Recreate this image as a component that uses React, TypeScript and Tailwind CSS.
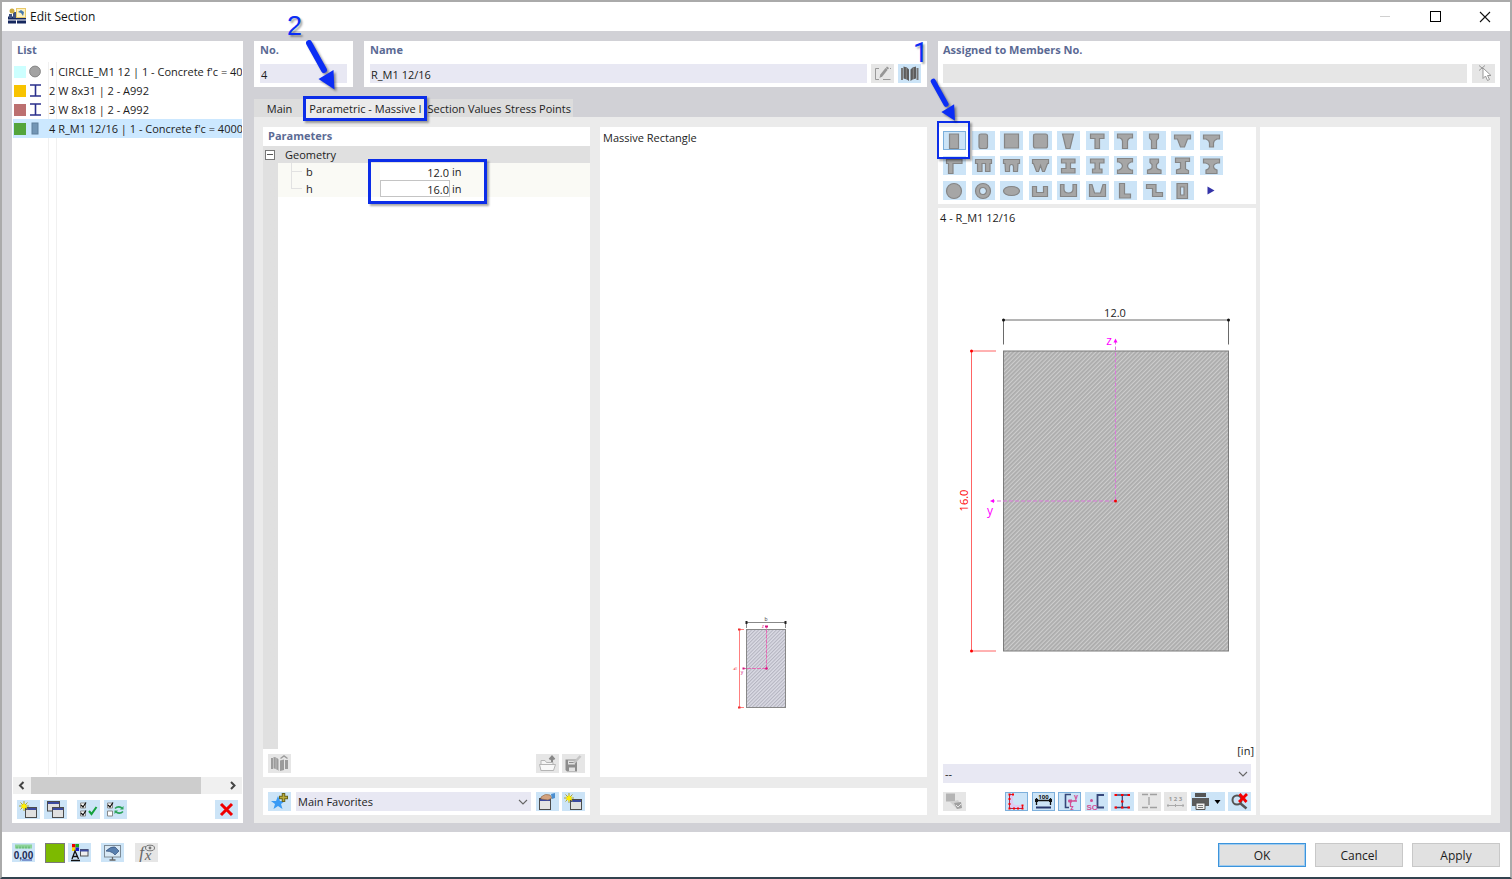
import { useState, type ReactNode } from 'react';
import clsx from 'clsx';

const iconBtn = 'flex h-[19px] w-[23px] shrink-0 items-center justify-center';
const panelTitle = 'text-[11px] leading-[18px] font-bold text-[#5b6a94]';

/* ---------- small building blocks ---------- */

type IconButtonProps = {
  label: string;
  disabled?: boolean;
  active?: boolean;
  className?: string;
  children: ReactNode;
};

function IconButton({ label, disabled, active, className, children }: IconButtonProps) {
  return (
    <button
      type="button"
      aria-label={label}
      disabled={disabled}
      className={clsx(
        iconBtn,
        disabled ? 'bg-[#e6e6e6]' : 'bg-[#cce4f7]',
        active && 'outline outline-1 -outline-offset-1 outline-[#7db0dc]',
        className
      )}
    >
      <svg viewBox="0 0 23 19" className="h-[19px] w-[23px]" fill="none">
        {children}
      </svg>
    </button>
  );
}

function Chevron() {
  return (
    <svg viewBox="0 0 10 6" className="pointer-events-none absolute top-[7px] right-[3px] h-[6px] w-[10px]" fill="none">
      <path d="M1 1l4 4 4-4" stroke="#666" strokeWidth="1.1" />
    </svg>
  );
}

function Arrow({ className }: { className: string }) {
  return (
    <svg viewBox="0 0 34 54" className={clsx('pointer-events-none absolute z-20 drop-shadow-[2px_2px_1px_rgba(0,0,0,0.4)]', className)}>
      <path d="M5 5l15 27" stroke="#0b2df5" strokeWidth="6" strokeLinecap="round" />
      <path d="M30.500 51.500L14.500 41 29.500 32Z" fill="#0b2df5" />
    </svg>
  );
}

const callout = 'pointer-events-none absolute z-10 border-[#0b2de8] shadow-[2px_2px_2px_rgba(0,0,0,0.35)]';
const calloutDigit =
  'pointer-events-none absolute z-20 text-[27px] leading-[27px] text-[#0b2df5] [text-shadow:2px_2px_2px_rgba(0,0,0,0.35)]';

/* ---------- data ---------- */

const sections = [
  { no: 1, name: "CIRCLE_M1 12 | 1 - Concrete f'c = 40", color: '#ccffff', shape: 'circle' },
  { no: 2, name: 'W 8x31 | 2 - A992', color: '#f8c300', shape: 'i' },
  { no: 3, name: 'W 8x18 | 2 - A992', color: '#bc7070', shape: 'i' },
  { no: 4, name: "R_M1 12/16 | 1 - Concrete f'c = 4000", color: '#54a53c', shape: 'rect' },
];

// outlines of the massive section types, drawn on a 23 x 19 button
const shapes = [
  { name: 'Rectangle', d: 'M6.500 3H15.500V17.500H6.500Z' },
  { name: 'Rounded rectangle', d: 'M9 3H13.500Q15.500 3 15.500 5V15.500Q15.500 17.500 13.500 17.500H9Q7 17.500 7 15.500V5Q7 3 9 3Z' },
  { name: 'Square', d: 'M4.500 3H18.500V17H4.500Z' },
  { name: 'Rounded square', d: 'M6.500 3H16.500Q18.500 3 18.500 5V15Q18.500 17 16.500 17H6.500Q4.500 17 4.500 15V5Q4.500 3 6.500 3Z' },
  { name: 'Trapezoid', d: 'M5.500 3H16.500L13 17.500H9Z' },
  { name: 'T-section', d: 'M4.500 3H18V7.500H13.500V17.500H9V7.500H4.500Z' },
  { name: 'T-section haunched', d: 'M3.500 3H18.500V7H16Q13.500 8 13.500 10.500V17.500H8.500V10.500Q8.500 8 6 7H3.500Z' },
  { name: 'T-section narrow', d: 'M6.500 3H15.500V7L13.500 9.500V17.500H8.500V9.500L6.500 7Z' },
  { name: 'T-section tapered', d: 'M3.500 4H19.500V8H16.500L13.500 16H9.500L6.500 8H3.500Z' },
  { name: 'T-section curved', d: 'M3.500 4H19.500V8H17Q13.500 9.500 13.500 12V16H9.500V12Q9.500 9.500 6 8H3.500Z' },
  { name: 'L-section inverted', d: 'M3.500 3.500H19V7.500H10V17.500H5.500V7.500H3.500Z' },
  { name: 'Double T', d: 'M3.500 3.500H19.500V7.500H18V15.500H13.500V7.500H10V15.500H5.500V7.500H3.500Z' },
  { name: 'Double T rounded', d: 'M3.500 3.500H19.500V7.500H18L17.500 15.500H13.500V11Q13.500 8.500 11.500 8.500T9.500 11V15.500H5.500L5 7.500H3.500Z' },
  { name: 'Double T tapered', d: 'M3.500 3.500H19.500V7.500H18.500L15.500 15.500H13.500L11.500 9.500 9.500 15.500H7.500L4.500 7.500H3.500Z' },
  { name: 'I-section', d: 'M4.500 3H18V7H13.500V12.500H18V17H4.500V12.500H9V7H4.500Z' },
  { name: 'I-section unequal', d: 'M4.500 3H18V7H13.500V13H16V17H6.500V13H9V7H4.500Z' },
  { name: 'I-section tapered', d: 'M3.500 2.500H18.500V6H17Q13.500 7.500 13.500 10T17 14H18.500V17.500H3.500V14H5Q8.500 12.500 8.500 10T5 6H3.500Z' },
  { name: 'I-section narrow', d: 'M7 3H15.500V6.500L13.500 8.500V11.500Q14 13.500 18 14V17.500H4.500V14Q8.500 13.500 9 11.500V8.500L7 6.500Z' },
  { name: 'I-section offset', d: 'M4.500 2H18.500V5.500H14.500V13L17.500 14.500V17.500H5.500V14L9.500 12.500V6.500H4.500Z' },
  { name: 'I-section asymmetric', d: 'M3.500 3H19.500V7H17.500Q13.500 8 13.500 10.500T17 14V17.500H6V14Q9.500 13 9.500 10.500T5.500 7H3.500Z' },
  { name: 'Circle', d: 'M3.500 10A7.500 7.500 0 1 0 18.500 10A7.500 7.500 0 1 0 3.500 10Z' },
  { name: 'Pipe', d: 'M3.500 10A7.500 7.500 0 1 0 18.500 10A7.500 7.500 0 1 0 3.500 10ZM7.500 10A3.500 3.500 0 1 0 14.500 10A3.500 3.500 0 1 0 7.500 10Z' },
  { name: 'Ellipse', d: 'M3.500 10A8 4.500 0 1 0 19.500 10A8 4.500 0 1 0 3.500 10Z' },
  { name: 'U-section', d: 'M3.500 5.500H7.500V11.500H14.500V5.500H18.500V15.500H3.500Z' },
  { name: 'U-section rounded', d: 'M3.500 3.500H7V8Q7 12 11.500 12T16 8V3.500H19.500V15.500H3.500Z' },
  { name: 'U-section tapered', d: 'M3.500 3.500H6L8.500 12H14.500L17 3.500H19.500V15.500H3.500Z' },
  { name: 'L-section', d: 'M5.500 2.500H10.500V13H16.500V17H5.500Z' },
  { name: 'Z-section', d: 'M3.500 3.500H13V11.500H19.500V15.500H9.500V7.500H3.500Z' },
  { name: 'Box', d: 'M6 2.500H16.500V17.500H6ZM9.500 6V14H13V6Z' },
];

const tabs = ['Main', 'Parametric - Massive I', 'Section Values', 'Stress Points'];

/* ---------- shared icon drawings ---------- */

function MiniWindow({ x, y }: { x: number; y: number }) {
  return (
    <g>
      <rect x={x + 0.5} y={y + 0.5} width="11" height="10" fill="#e0e0e0" stroke="#4c4c4c" />
      <rect x={x + 1} y={y + 1} width="10" height="2" fill="#3b4aa0" />
    </g>
  );
}

function NewWindowIcon() {
  return (
    <>
      <MiniWindow x={8} y={7} />
      <path d="M7 1v10M2 6h10M3.500 2.500l7 7M10.500 2.500l-7 7" stroke="#a89b20" strokeWidth=".9" />
      <path d="M7 2.500l1 2.300 2.300-.4-1.300 1.800 1.300 2-2.300-.4L7 10 6 7.800l-2.300.4L5 6.200 3.700 4.400l2.300.4z" fill="#ffef00" />
    </>
  );
}

function SectionGlyph({ shape }: { shape: string }) {
  return (
    <svg viewBox="0 0 13 13" className="h-[13px] w-[13px] shrink-0" fill="none">
      {shape === 'circle' && <circle cx="6" cy="6.500" r="5.400" fill="#a3a3a3" stroke="#858585" />}
      {shape === 'i' && <path d="M1 1h11M1 12h11M6.500 1v11" stroke="#2a2f8c" strokeWidth="1.600" />}
      {shape === 'rect' && <rect x="3" y="1" width="6" height="11" fill="#7396b5" stroke="#5f7f9c" />}
    </svg>
  );
}

/* ---------- parts of the dialog ---------- */

function TitleBar() {
  return (
    <header className="flex h-[29px] shrink-0 items-center bg-white pl-[6px]">
      <svg viewBox="0 0 18 16" className="mb-[2px] h-[16px] w-[18px]">
        <path d="M0 8.500h18v3H0zM0 12.500h8v3H0zM9 12.500h9v3H9z" fill="#15275e" />
        <path d="M1 6h3v4H1zM5 4h3v6H5z" fill="#3e5280" />
        <circle cx="4" cy="3" r="2.500" fill="#c9a93f" />
        <rect x="8.500" y=".5" width="9" height="9" fill="#fff2bf" stroke="#e8c96a" />
        <path d="M10 4l3-2 3 2-1 4-2-3z" fill="#4778ad" />
      </svg>
      <h1 className="ml-1 flex-1 text-[12px] text-[#111]">Edit Section</h1>
      <button type="button" aria-label="Minimize" disabled className="flex h-full w-[50px] items-center justify-center">
        <span className="h-px w-[10px] bg-[#d0d0d0]" />
      </button>
      <button type="button" aria-label="Maximize" className="flex h-full w-[50px] items-center justify-center">
        <span className="size-[11px] border border-black" />
      </button>
      <button type="button" aria-label="Close" className="flex h-full w-[50px] items-center justify-center">
        <svg viewBox="0 0 12 12" className="size-[12px]">
          <path d="M1 1l10 10M11 1L1 11" stroke="#111" strokeWidth="1.100" />
        </svg>
      </button>
    </header>
  );
}

function SectionList() {
  const [selected, setSelected] = useState(4);
  return (
    <aside className="flex w-[231px] shrink-0 flex-col bg-white">
      <h2 className={clsx(panelTitle, 'mb-[3px] pl-[5px]')}>List</h2>
      <ul className="relative mx-px flex-1 overflow-hidden">
        <li aria-hidden="true" className="absolute inset-y-0 left-[35px] w-[9px] border-x border-[#f0f0f0]" />
        {sections.map((s) => (
          <li key={s.no} className="relative">
            <button
              type="button"
              onClick={() => setSelected(s.no)}
              className={clsx('flex h-[19px] w-full items-center overflow-hidden pl-px', selected === s.no && 'bg-[#cce8ff]')}
            >
              <span className="size-[12px] shrink-0" style={{ backgroundColor: s.color }} />
              <span className="ml-[3px] flex">
                <SectionGlyph shape={s.shape} />
              </span>
              <span className="ml-[7px] pt-px whitespace-nowrap">
                {s.no} {s.name}
              </span>
            </button>
          </li>
        ))}
      </ul>
      {/* horizontal scroll bar */}
      <div className="mx-px mt-[2px] flex h-[17px] items-center bg-[#f0f0f0]">
        <svg viewBox="0 0 18 17" className="h-[17px] w-[18px] shrink-0">
          <path d="M10.500 5L7 8.500l3.500 3.500" fill="none" stroke="#444" strokeWidth="2" />
        </svg>
        <div className="flex-1">
          <div className="h-[17px] w-[88%] bg-[#cdcdcd]" />
        </div>
        <svg viewBox="0 0 18 17" className="h-[17px] w-[18px] shrink-0">
          <path d="M7 5l3.500 3.500L7 12" fill="none" stroke="#444" strokeWidth="2" />
        </svg>
      </div>
      <div className="flex gap-1 px-[5px] pt-[6px] pb-1">
        <IconButton label="New section">
          <NewWindowIcon />
        </IconButton>
        <IconButton label="Copy section">
          <rect x="3.500" y="1.500" width="12" height="9.500" fill="#e0e0e0" stroke="#4c4c4c" />
          <path d="M4 3h11" stroke="#3b4aa0" strokeWidth="2" />
          <rect x="8.500" y="7.500" width="11" height="10" fill="#e0e0e0" stroke="#4c4c4c" />
          <path d="M9 9h10" stroke="#3b4aa0" strokeWidth="2" />
        </IconButton>
        <IconButton label="Select all" className="ml-[6px]">
          <path d="M3.500 3h5v5h-5zM3.500 11h5v5h-5z" fill="#fff" stroke="#888" />
          <path d="M4 5l2 2 3-4.500M4 13l2 2 3-4.500" stroke="#111" strokeWidth="1.300" />
          <path d="M12 11l2.500 3 5-7" stroke="#13a13c" strokeWidth="2" />
        </IconButton>
        <IconButton label="Invert selection">
          <path d="M3.500 3h5v5h-5zM3.500 11h5v5h-5z" fill="#fff" stroke="#888" />
          <path d="M4 5l2 2 3-4.500" stroke="#111" strokeWidth="1.300" />
          <path d="M11 8.500q3-3 7-.5M19 11.500q-3 3-7 .5" stroke="#2ba35a" strokeWidth="1.600" />
          <path d="M19.500 6v3.500H16zM10.500 14v-3.500H14z" fill="#2ba35a" />
        </IconButton>
        <IconButton label="Delete section" className="ml-auto">
          <path d="M6 4l11 11M17 4L6 15" stroke="#f00000" strokeWidth="3" />
        </IconButton>
      </div>
    </aside>
  );
}

const field = 'h-[19px] w-full min-w-0 px-[1px] pt-[2px] outline-none';

function TopFields() {
  return (
    <div className="flex gap-[11px]">
      <div className="h-[46px] w-[99px] bg-white px-[6px]">
        <label htmlFor="no" className={clsx(panelTitle, 'block')}>No.</label>
        <input id="no" defaultValue="4" className={clsx(field, 'mt-[5px] bg-[#e8e8f3]')} />
      </div>
      <div className="h-[46px] min-w-0 flex-1 bg-white px-[6px]">
        <label htmlFor="name" className={clsx(panelTitle, 'block')}>Name</label>
        <div className="mt-[5px] flex gap-1">
          <input id="name" defaultValue="R_M1 12/16" className={clsx(field, 'flex-1 bg-[#e8e8f3]')} />
          <IconButton label="Edit name" disabled>
            <path d="M8 4.500H4.500v11H8M12 15.500h7.500M15.500 4.500h1.500M19 4.500h1" stroke="#999" />
            <path d="M8.500 14l.8-3.500 5.200-6.500 2.200 1.800-5.200 6.500z" fill="#969696" />
            <path d="M15 3.400l1-1 2 1.600-.8 1.200z" fill="#969696" />
          </IconButton>
          <IconButton label="Section library">
            <path d="M3 4h2v12H3zM18.500 4h2v12h-2z" fill="#777" />
            <path d="M5.500 2.500q4 .5 5.500 3V17q-1.500-2-5.500-2.500zM18 2.500q-4 .5-5.500 3V17q1.500-2 5.500-2.500z" fill="#5c5c5c" />
            <path d="M8.300 4v11M15.300 4v11" stroke="#8a8a8a" />
          </IconButton>
        </div>
      </div>
      <div className="relative h-[46px] w-[562px] bg-white px-[5px]">
        <span className={clsx(calloutDigit, "top-[-1px] left-[-25px] font-['Roboto',sans-serif]")}>1</span>
        <Arrow className="top-[36px] left-[-9px] h-[46px] w-[29px]" />
        <label htmlFor="members" className={clsx(panelTitle, 'block')}>Assigned to Members No.</label>
        <div className="mt-[5px] flex gap-[5px]">
          <input id="members" readOnly className={clsx(field, 'flex-1 bg-[#e6e6e6]')} />
          <IconButton label="Pick members" disabled>
            <path d="M7 1.500l6 5M13 1.500l-6 5" stroke="#999" />
            <path d="M11 4v10.500l2.500-2.500 2 4.500 2-1-2-4h3.500z" fill="#fff" stroke="#999" />
          </IconButton>
        </div>
      </div>
    </div>
  );
}

function Parameters() {
  return (
    <div className="flex min-w-0 flex-1 flex-col gap-[11px]">
      <section className="flex flex-1 flex-col bg-white">
        <h2 className={clsx(panelTitle, 'h-[19px] pl-[5px]')}>Parameters</h2>
        <div className="flex flex-1 flex-col bg-linear-to-r from-[#e0e0e0] from-[15px] to-white to-[15px]">
          <div className="flex h-[17px] items-center bg-[#e0e0e0] pl-[2px]">
            <button type="button" aria-label="Collapse" className="flex size-[10px] items-center justify-center border border-[#777] bg-white">
              <span className="h-px w-[6px] bg-[#555]" />
            </button>
            <span className="ml-[10px] pt-[2px]">Geometry</span>
          </div>
          <div className="relative ml-[15px]">
            {[
              { id: 'b', value: '12.0' },
              { id: 'h', value: '16.0' },
            ].map((p) => (
              <div key={p.id} className="flex h-[17px] items-center bg-[#fafaf5]">
                <span className="ml-[13px] h-px w-[11px] bg-[#e2e2e2]" />
                <label htmlFor={p.id} className="ml-[4px] w-[74px] pt-[2px]">{p.id}</label>
                <input
                  id={p.id}
                  defaultValue={p.value}
                  className={clsx(
                    'h-[17px] w-[70px] border bg-white pt-px text-right outline-none',
                    p.id === 'h' ? 'border-[#c4c4c4]' : 'border-transparent'
                  )}
                />
                <span className="ml-[2px] pt-[2px]">in</span>
              </div>
            ))}
            <span className="absolute top-0 left-[13px] h-[26px] w-px bg-[#e2e2e2]" />
            <span className={clsx(callout, 'top-[-4px] left-[90px] h-[45px] w-[119px] border-[3px]')} />
          </div>
        </div>
        <div className="flex gap-[3px] px-[5px] pt-[5px] pb-1">
          <IconButton label="Parameter library" disabled>
            <path d="M3 4h2v11H3zM5.500 3q4 .5 5 2.500V17q-1-2-5-2.500zM12 6.500l4-1V16l-4 1zM17 6h3v9h-3z" fill="#9c9c9c" />
            <path d="M8 4v11" stroke="#bbb" />
            <path d="M12.500 4.500l3.500-2.500 3.500 2.500" stroke="#9c9c9c" strokeWidth="1.500" />
          </IconButton>
          <IconButton label="Load parameters" disabled className="ml-auto">
            <path d="M5 16.500V6.500h4l1.500 2H17v8z" fill="#f4f4f4" stroke="#b5b5b5" />
            <path d="M5 16.500L3.500 10.500h16l-2 6z" fill="#f8f8f8" stroke="#b5b5b5" />
            <path d="M16 8V3M13.500 5.500L16 2.500l2.500 3" stroke="#888" strokeWidth="2" />
          </IconButton>
          <IconButton label="Save parameters" disabled>
            <path d="M3.500 5.500H15V17.500H5L3.500 16z" fill="#8d8d8d" />
            <path d="M6 6.500h7v4H6zM7 13.500h6v3.500H7z" fill="#e2e2e2" />
            <path d="M7 8.500h5" stroke="#8d8d8d" />
            <path d="M12 9l6.500-7" stroke="#c4c4c4" strokeWidth="2.500" />
          </IconButton>
        </div>
      </section>
      <section className="flex h-[27px] gap-[3px] bg-white px-[5px] py-1">
        <IconButton label="Add to favorites">
          <path d="M10 4l2 5h5l-4 3 1.500 5L10 14l-4.500 3L7 12 3 9h5z" fill="#3a9bf4" />
          <path d="M15.500 1v9M11 5.500h9" stroke="#69631c" strokeWidth="3.500" />
          <path d="M15.500 2v7M12 5.500h7" stroke="#b9ac3c" strokeWidth="1.500" />
        </IconButton>
        <div className="relative mx-[2px] min-w-0 flex-1">
          <select aria-label="Favorites" className="h-[19px] w-full appearance-none bg-[#e8e8f3] pt-[2px] pl-[2px] outline-none">
            <option>Main Favorites</option>
          </select>
          <Chevron />
        </div>
        <IconButton label="Manage favorites">
          <rect x="3.500" y="6.500" width="11" height="11" fill="#e4e4e4" stroke="#4c4c4c" />
          <path d="M4 8h10" stroke="#3b4aa0" strokeWidth="2" />
          <path d="M5 5q4-4 9-2l2 3-4 2-7-1z" fill="#d3a27e" stroke="#8c664a" strokeWidth=".6" />
          <path d="M15 2l4-1v5l-3 1z" fill="#4b8fd0" />
        </IconButton>
        <IconButton label="New favorite">
          <NewWindowIcon />
        </IconButton>
      </section>
    </div>
  );
}

function SchemeView() {
  return (
    <div className="flex min-w-0 flex-1 flex-col gap-[11px]">
      <section className="flex flex-1 flex-col justify-between bg-white">
        <p className="px-[3px] pt-[2px] leading-[18px]">Massive Rectangle</p>
        <svg viewBox="0 0 60 100" className="mr-[7px] mb-[65px] h-[100px] w-[60px] self-center" fill="none">
          <defs>
            <pattern id="hatch-small" width="2.500" height="2.500" patternUnits="userSpaceOnUse" patternTransform="rotate(45)">
              <rect width="2.500" height="2.500" fill="#dcdce6" />
              <rect width="1.100" height="2.500" fill="#b4b4c0" />
            </pattern>
          </defs>
          <rect x="16.500" y="17.500" width="39" height="78" fill="url(#hatch-small)" stroke="#888" />
          <path d="M16.500 9v7M55.500 9v7M16.500 10.500h39" stroke="#888" />
          <path d="M15.500 9h2v3h-2zM54.500 9h2v3h-2z" fill="#222" />
          <path d="M9.500 17.500v78M8 17.500h6M8 95.500h6" stroke="#ff8080" />
          <path d="M8 16.500h2.500v2H8zM8 94.500h2.500v2H8z" fill="#ee3030" />
          <path d="M36.500 56.500V15M36 56.500H14" stroke="#e46cb4" strokeDasharray="4 1" />
          <circle cx="36.500" cy="56.500" r="1.300" fill="#d8127d" />
          <path d="M35 13.500h3v2h-3zM12.500 55.500h2v2h-2z" fill="#d8127d" />
          <text x="36" y="9" fontSize="5" textAnchor="middle" fill="#333">b</text>
          <text x="33" y="16" fontSize="5" textAnchor="middle" fill="#d8127d">z</text>
          <text x="12" y="62" fontSize="5" textAnchor="middle" fill="#d8127d">y</text>
          <text x="7" y="57" fontSize="5" textAnchor="middle" fill="#ee3030" transform="rotate(-90 7 57)">h</text>
        </svg>
      </section>
      <section className="h-[27px] bg-white" />
    </div>
  );
}

function ShapePicker() {
  const rows = [shapes.slice(0, 10), shapes.slice(10, 20), shapes.slice(20)];
  return (
    <section className="flex h-[77px] flex-col gap-[6px] bg-white pt-[4px] pl-[5px]">
      {rows.map((row, r) => (
        <div key={r} className="flex w-[280px] justify-between">
          {row.map((s, i) => (
            <div key={s.name} className="relative">
              <IconButton label={s.name} active={r === 0 && i === 0}>
                <path d={s.d} fill="#a6a6a6" stroke="#858585" strokeWidth="1.200" fillRule="evenodd" />
              </IconButton>
              {r === 0 && i === 0 && <span className={clsx(callout, 'top-[-10px] left-[-6px] h-[38px] w-[33px] border-2')} />}
            </div>
          ))}
          {r === 2 && (
            <button type="button" aria-label="More shapes" className={iconBtn}>
              <svg viewBox="0 0 8 9" className="h-[9px] w-[8px]">
                <path d="M.5.5l7 4-7 4z" fill="#3433a8" />
              </svg>
            </button>
          )}
        </div>
      ))}
    </section>
  );
}

function SectionDrawing() {
  return (
    <svg viewBox="1 0 318 514" className="min-h-0 w-full flex-1 text-[11px]" fill="none">
      <defs>
        <pattern id="hatch" width="3" height="3" patternUnits="userSpaceOnUse" patternTransform="rotate(45)">
          <rect width="3" height="3" fill="#cdcdcd" />
          <rect width="1.800" height="3" fill="#acacac" />
        </pattern>
      </defs>
      <rect x="66.500" y="123.500" width="225" height="300" fill="url(#hatch)" stroke="#7c7c7c" />
      <path d="M66.500 117V92.500h225V117" stroke="#6a6a6a" />
      <circle cx="66.500" cy="92.500" r="1.500" fill="#111" />
      <circle cx="291.500" cy="92.500" r="1.500" fill="#111" />
      <text x="178" y="89" textAnchor="middle" fill="#222">12.0</text>
      <path d="M59 123.500H34.500v300H59" stroke="#ff6464" />
      <circle cx="34.500" cy="123.500" r="1.500" fill="#f00" />
      <circle cx="34.500" cy="423.500" r="1.500" fill="#f00" />
      <text x="31" y="273" textAnchor="middle" fill="#f00" transform="rotate(-90 31 273)">16.0</text>
      <path d="M178.500 273V114M178 273.500H55" stroke="#db78db" strokeDasharray="4 2" />
      <path d="M178.500 111l2 4h-4zM53 273.500l4-2v4z" fill="#f0f" />
      <circle cx="178.500" cy="273.500" r="1.500" fill="#f00000" />
      <text x="172" y="117" fontSize="12" textAnchor="middle" fill="#f0f">z</text>
      <text x="53" y="287" fontSize="12" textAnchor="middle" fill="#f0f">y</text>
    </svg>
  );
}

function PreviewToolbar() {
  return (
    <div className="flex justify-between px-[5px] pt-[9px] pb-1">
      <IconButton label="Layers" disabled>
        <rect x="3" y="1.500" width="9" height="8" fill="#b4b4b4" />
        <path d="M7 10l8-2 4 8-5 1z" fill="#d0d0d0" />
        <path d="M11 11l7-1 1 6-5 1z" fill="#a0a0a0" />
        <path d="M13 13l2 2 3-3" stroke="#e6e6e6" />
      </IconButton>
      <div className="flex w-[246px] justify-between">
        <IconButton label="Outline points" active>
          <path d="M4.500 2.500H8V10q0 3 3 3h6.500v3.500h-13z" fill="#dccbf2" />
          <path d="M8 2.500H4.500v14h13v-3" stroke="#a02a58" />
          <path d="M3.500 1.500h2v2h-2zM7 1.500h2v2H7zM3.500 6h2v2h-2zM3.500 11h2v2h-2zM3.500 15.500h2v2h-2zM8 15.500h2v2H8zM12 15.500h2v2h-2zM16.500 15.500h2v2h-2zM16.500 12.500h2v2h-2z" fill="#f00" />
        </IconButton>
        <IconButton label="Dimensions" active>
          <text x="11.500" y="6.500" fontSize="6" fontWeight="700" textAnchor="middle" fill="#111">100</text>
          <path d="M4.500 6v7M18.500 6v7M4 8.500h15" stroke="#111" strokeWidth="1.300" />
          <path d="M3 7h3v3H3zM17 7h3v3h-3z" fill="#111" />
          <path d="M4 15.500h15" stroke="#26366b" strokeWidth="2" />
        </IconButton>
        <IconButton label="Principal axes" active>
          <path d="M13 2.500H7.500v13H11" stroke="#36477a" strokeWidth="1.600" />
          <path d="M10 9H19M12.500 8v7" stroke="#d24f95" strokeWidth="1.300" />
          <path d="M10.500 7.500h3.500v3h-3.500z" fill="#d24f95" />
          <text x="18" y="7" fontSize="7" fontWeight="700" textAnchor="middle" fill="#d24f95">y</text>
          <text x="14" y="18" fontSize="7" fontWeight="700" textAnchor="middle" fill="#d24f95">z</text>
        </IconButton>
        <IconButton label="Shear center">
          <path d="M19 3h-6.500v12.500H19" stroke="#36477a" strokeWidth="1.800" />
          <circle cx="6.500" cy="8.500" r="1.500" fill="#d24f95" />
          <text x="7" y="18" fontSize="8" fontWeight="700" fontFamily="Liberation Sans, sans-serif" textAnchor="middle" fill="#d24f95">SC</text>
        </IconButton>
        <IconButton label="Stress points">
          <path d="M4 3h14.500M4 15.500h14.500M11.300 3v12.500" stroke="#36477a" strokeWidth="1.300" />
          <path d="M3.500 2h2.500v2H3.500zM10 2h2.500v2H10zM16.500 2H19v2h-2.500zM3.500 14.500H6v2H3.500zM10 14.500h2.500v2H10zM16.500 14.500H19v2h-2.500zM10 8.500h2.500v2H10z" fill="#f00" />
        </IconButton>
        <IconButton label="Section parts" disabled>
          <path d="M4 2.500h6M12 2.500h7M4 15.500h6M12 15.500h7M11 5v8" stroke="#a0a0a0" strokeWidth="1.300" />
        </IconButton>
        <IconButton label="Numbering" disabled>
          <text x="11.500" y="9" fontSize="6" fontWeight="700" textAnchor="middle" fill="#999">1 2 3</text>
          <path d="M3 13.500h17M4 12v3M11.500 12v3M19 12v3" stroke="#aaa" />
        </IconButton>
        <button type="button" aria-label="Print" className="flex h-[19px] w-[34px] shrink-0 bg-[#cce4f7]">
          <svg viewBox="0 0 34 19" className="h-[19px] w-[34px]">
            <path d="M4 1h11v4H4z" fill="#555" />
            <path d="M1 6h17v8H1z" fill="#5b5b5b" />
            <path d="M5 11h9v6.500H5z" fill="#f0f0f0" stroke="#555" />
            <path d="M7 13.500h5M7 15.500h5" stroke="#777" />
            <path d="M23.500 8h6l-3 4z" fill="#000" />
          </svg>
        </button>
        <IconButton label="Reset zoom">
          <circle cx="9" cy="8" r="4.500" stroke="#555" strokeWidth="2" />
          <path d="M12.500 11.500l6 5" stroke="#555" strokeWidth="2.500" />
          <path d="M11.500 2l7 8M19 2l-8 8" stroke="#f50000" strokeWidth="2.800" />
        </IconButton>
      </div>
    </div>
  );
}

function Preview() {
  return (
    <div className="flex w-[318px] shrink-0 flex-col gap-1">
      <ShapePicker />
      <section className="flex min-h-0 flex-1 flex-col bg-white">
        <p className="pt-px pl-[2px] leading-[18px]">4 - R_M1 12/16</p>
        <SectionDrawing />
        <p className="pr-[2px] text-right leading-[18px]">[in]</p>
        <div className="relative mr-[5px] mt-1 ml-[5px]">
          <select aria-label="Display values" className="h-[19px] w-full appearance-none bg-[#e8e8f3] pt-[2px] pl-[2px] outline-none">
            <option>--</option>
          </select>
          <Chevron />
        </div>
        <PreviewToolbar />
      </section>
    </div>
  );
}

function Footer() {
  const btn = 'h-[24px] w-[88px] border bg-[#e1e1e1] pt-px text-[12px] leading-[22px]';
  return (
    <footer className="flex h-[45px] shrink-0 items-start bg-white px-[10px] pt-[11px]">
      <IconButton label="Units and decimals">
        <path d="M3 1.500h17v4H3z" fill="#8ed49a" />
        <path d="M5 3.500v2M8 3.500v2M11 3.500v2M14 3.500v2M17 3.500v2" stroke="#4fae62" />
        <text x="11.500" y="15.500" fontSize="10" fontWeight="700" fontFamily="Liberation Sans, sans-serif" textAnchor="middle" fill="#1d2a55">0,00</text>
        <path d="M10 17h10" stroke="#2d49a8" />
      </IconButton>
      <button type="button" aria-label="Section color" className="ml-[10px] size-[20px] border border-[#7a7a7a] bg-[#7dba00]" />
      <IconButton label="Display colors" className="ml-[3px]">
        <path d="M4 1h3.500v3.500H4z" fill="#e00" />
        <path d="M7.500 1H11v3.500H7.500z" fill="#1ca81c" />
        <path d="M4 4.500h3.500V8H4z" fill="#fd0" />
        <path d="M7.500 4.500H11V8H7.500z" fill="#22c" />
        <path d="M4 16l3-8 3.500 8M5 13.500h5M3 17.500h9" stroke="#111" strokeWidth="1.300" />
        <rect x="12.500" y="6.500" width="7.500" height="6.500" fill="#eee" stroke="#555" />
        <path d="M12 7.500h8.500" stroke="#3b4aa0" strokeWidth="2" />
      </IconButton>
      <IconButton label="View settings" className="ml-[10px]">
        <rect x="3.500" y="2.500" width="16" height="11.500" fill="#d9e9f5" stroke="#7c8a96" />
        <path d="M5 8q5-5 9-4l4 4-4 4-2-2q-3-2-7-2z" fill="#587fae" stroke="#35527c" strokeWidth=".7" />
        <path d="M11.500 14v3M8.500 17h6" stroke="#666" strokeWidth="1.300" />
      </IconButton>
      <IconButton label="Formula" disabled className="ml-[11px]">
        <text x="6.500" y="15" fontSize="17" fontStyle="italic" fontFamily="Liberation Serif, serif" textAnchor="middle" fill="#666">f</text>
        <text x="13" y="16.500" fontSize="15" fontStyle="italic" fontFamily="Liberation Serif, serif" textAnchor="middle" fill="#666">x</text>
        <ellipse cx="15" cy="5" rx="4.500" ry="2.800" stroke="#777" />
        <circle cx="15" cy="5" r="1.400" fill="#777" />
      </IconButton>
      <div className="ml-auto flex gap-[9px]">
        <button type="button" className={clsx(btn, 'border-[#3c94dc] outline outline-1 -outline-offset-2 outline-[#9fcbee]')}>OK</button>
        <button type="button" className={clsx(btn, 'border-[#c8c8c8]')}>Cancel</button>
        <button type="button" className={clsx(btn, 'border-[#c8c8c8]')}>Apply</button>
      </div>
    </footer>
  );
}

export default function App() {
  const [tab, setTab] = useState(1);

  return (
    <div className="flex h-screen min-h-[640px] flex-col overflow-hidden border-2 border-[#aaa] border-b-[#33434f] bg-white font-['Open_Sans','Noto_Sans',sans-serif] text-[11px] text-[#1c1c1c]">
      <TitleBar />
      <div className="flex min-h-0 flex-1 gap-[11px] bg-[#d1d1d6] px-[10px] pt-[10px] pb-[9px]">
        <SectionList />
        <main className="flex min-w-0 flex-1 flex-col">
          <TopFields />
          <div role="tablist" className="mt-[12px] flex h-[18px]">
            {tabs.map((t, i) => (
              <div key={t} className="relative">
                <button
                  type="button"
                  role="tab"
                  aria-selected={tab === i}
                  onClick={() => setTab(i)}
                  className={clsx(
                    'h-[18px] pt-[2px] whitespace-nowrap',
                    i === 0 && 'w-[51px]',
                    i === 1 && 'w-[121px]',
                    i === 2 && 'w-[77px]',
                    i === 3 && 'w-[70px]',
                    tab === i ? 'bg-[#ebebeb]' : 'bg-[#dddddd]'
                  )}
                >
                  {t}
                </button>
                {i === 1 && (
                  <>
                    <span className={clsx(callout, 'top-[-3px] left-[-2px] h-[25px] w-[124px] border-[3px]')} />
                    <span className={clsx(calloutDigit, "top-[-86px] left-[-18px] font-['Liberation_Sans',Arial,sans-serif]")}>2</span>
                    <Arrow className="top-[-61px] left-[-1px] h-[54px] w-[34px]" />
                  </>
                )}
              </div>
            ))}
          </div>
          <div className="flex min-h-0 flex-1 bg-[#ebebeb] px-[9px] pt-[10px] pb-[8px]">
            <Parameters />
            <div className="w-[10px]" />
            <SchemeView />
            <div className="w-[11px]" />
            <Preview />
            <section className="ml-1 w-[231px] shrink-0 bg-white" />
          </div>
        </main>
      </div>
      <Footer />
    </div>
  );
}
